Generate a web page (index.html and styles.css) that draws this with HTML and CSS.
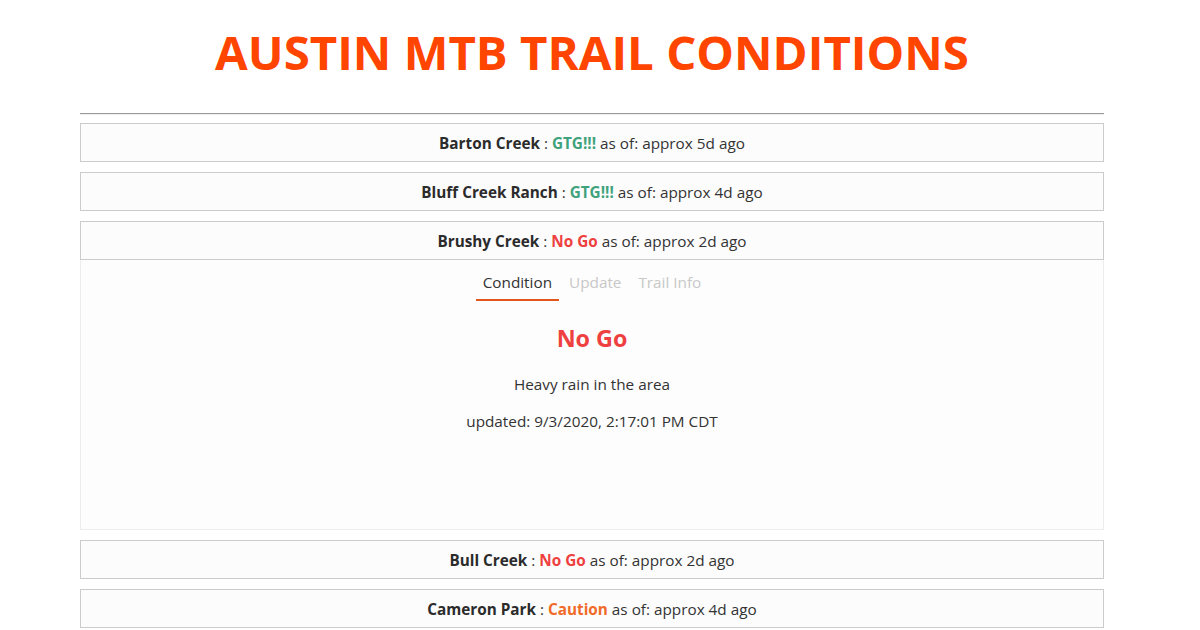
FILE: index.html
```html
<!DOCTYPE html>
<html>
<head>
<meta charset="utf-8">
<title>Austin MTB Trail Conditions</title>
<link rel="stylesheet" href="styles.css">
</head>
<body>
<div class="page">
  <h1 class="title">AUSTIN MTB TRAIL CONDITIONS</h1>
  <hr class="rule">
  <div class="trails">
    <div class="trail">
      <div class="trail-head"><b class="name">Barton Creek</b> : <b class="gtg">GTG!!!</b> as of: approx 5d ago</div>
    </div>
    <div class="trail">
      <div class="trail-head"><b class="name">Bluff Creek Ranch</b> : <b class="gtg">GTG!!!</b> as of: approx 4d ago</div>
    </div>
    <div class="trail open">
      <div class="trail-head"><b class="name">Brushy Creek</b> : <b class="nogo">No Go</b> as of: approx 2d ago</div>
      <div class="panel">
        <div class="tabs">
          <span class="tab active">Condition</span>
          <span class="tab">Update</span>
          <span class="tab">Trail Info</span>
        </div>
        <h2 class="status nogo">No Go</h2>
        <p class="note first">Heavy rain in the area</p>
        <p class="note">updated: 9/3/2020, 2:17:01 PM CDT</p>
      </div>
    </div>
    <div class="trail">
      <div class="trail-head"><b class="name">Bull Creek</b> : <b class="nogo">No Go</b> as of: approx 2d ago</div>
    </div>
    <div class="trail">
      <div class="trail-head"><b class="name">Cameron Park</b> : <b class="caution">Caution</b> as of: approx 4d ago</div>
    </div>
  </div>
</div>
</body>
</html>
```
FILE: styles.css
```css
html, body {
  margin: 0;
  padding: 0;
  background: #ffffff;
}
body {
  font-family: "Open Sans", "Noto Sans", "DejaVu Sans", sans-serif;
  color: #333333;
  font-size: 15.3px;
  overflow: hidden;
}
.page {
  padding: 0 96px 0 80px;
}
.title {
  margin: 0;
  padding-top: 22px;
  height: 82px;
  box-sizing: border-box;
  text-align: center;
  color: #ff4500;
  font-size: 47.4px;
  font-weight: 700;
  line-height: 60px;
  letter-spacing: 0;
}
.rule {
  margin: 31px 0 0 0;
  border: 0;
  border-top: 1px solid #9a9a9a;
  border-bottom: 1px solid #eeeeee;
  height: 0;
}
.trails {
  display: flex;
  flex-direction: column;
  gap: 10px;
  margin-top: 8px;
}
.trail-head {
  height: 39px;
  box-sizing: border-box;
  border: 1px solid #cccccc;
  background: #fcfcfc;
  display: flex;
  align-items: center;
  justify-content: center;
  white-space: pre;
  font-size: 15.3px;
}
.name {
  color: #2b2b2b;
  font-weight: 700;
}
.gtg { color: #3fa27c; }
.nogo { color: #ef4040; }
.caution { color: #f06a28; }
.panel {
  height: 270px;
  box-sizing: border-box;
  border: 1px solid #ededed;
  border-top: 0;
  background: #fdfdfd;
  display: flex;
  flex-direction: column;
  align-items: center;
  padding-top: 11px;
}
.tabs {
  display: flex;
  gap: 3px;
}
.tab {
  padding: 0 7px 6px 7px;
  color: #c8c8c8;
  font-size: 15.3px;
  line-height: 22px;
  border-bottom: 2px solid transparent;
}
.tab.active {
  color: #333333;
  border-bottom-color: #e2561e;
}
.status {
  margin: 22px 0 0 0;
  font-size: 23.3px;
  font-weight: 700;
  line-height: 30px;
}
.note {
  margin: 15px 0 0 0;
  font-size: 15.3px;
  line-height: 22px;
}
.note.first {
  margin-top: 20px;
}
```
